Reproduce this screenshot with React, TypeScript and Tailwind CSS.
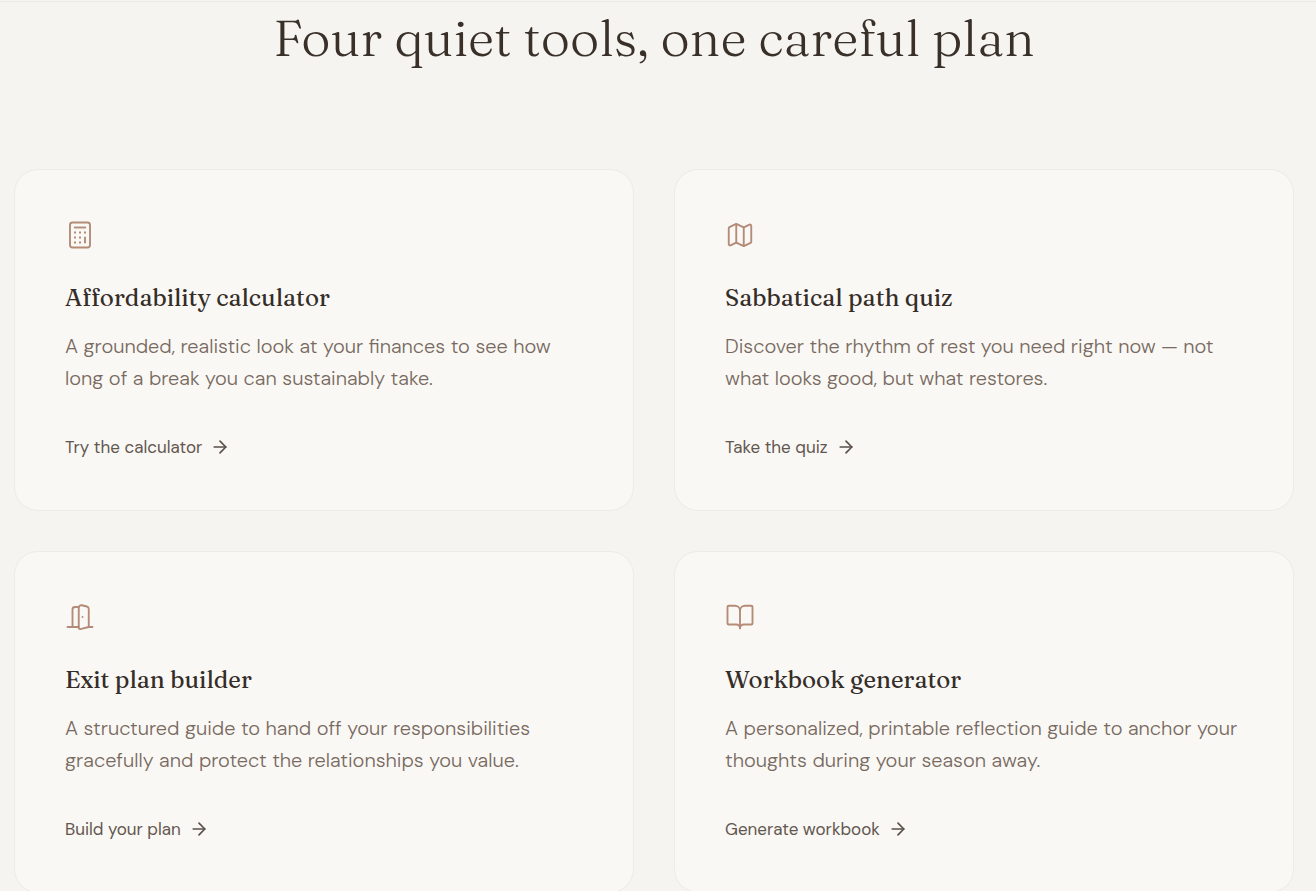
import { ArrowRight, BookOpen, Map } from 'lucide-react';
import type { ReactNode } from 'react';

const CalculatorIcon = () => (
  <svg
    className="size-[30px] text-[#b38b77]"
    viewBox="0 0 24 24"
    fill="none"
    stroke="currentColor"
    strokeWidth="1.5"
    strokeLinejoin="round"
    aria-hidden="true"
  >
    <rect x="4" y="2" width="16" height="20" rx="2" />
    <path d="M7.2 6h9.6" />
    <path d="M7.2 10h1.6M11.2 10h1.6M15.2 10h1.6M7.2 14h1.6M11.2 14h1.6M7.2 18h1.6M11.2 18h1.6M16 13.4v5.2" />
  </svg>
);

const DoorIcon = () => (
  <svg
    className="size-[30px] text-[#b38b77]"
    viewBox="0 0 24 24"
    fill="none"
    stroke="currentColor"
    strokeWidth="1.5"
    strokeLinecap="round"
    strokeLinejoin="round"
    aria-hidden="true"
  >
    <path d="M11 20H2" />
    <path d="M11 4.562v16.157a1 1 0 0 0 1.242.97L19 20V5.562a2 2 0 0 0-1.515-1.94l-4-1A2 2 0 0 0 11 4.561z" />
    <path d="M11 4H8a2 2 0 0 0-2 2v14" />
    <path d="M14 12h.01" />
    <path d="M22 20h-3" />
  </svg>
);

interface Tool {
  icon: ReactNode;
  title: string;
  description: string;
  action: string;
  href: string;
}

const tools: Tool[] = [
  {
    icon: <CalculatorIcon />,
    title: 'Affordability calculator',
    description:
      'A grounded, realistic look at your finances to see how long of a break you can sustainably take.',
    action: 'Try the calculator',
    href: '#calculator',
  },
  {
    icon: <Map className="size-[30px] text-[#b38b77]" strokeWidth={1.5} />,
    title: 'Sabbatical path quiz',
    description:
      'Discover the rhythm of rest you need right now — not what looks good, but what restores.',
    action: 'Take the quiz',
    href: '#quiz',
  },
  {
    icon: <DoorIcon />,
    title: 'Exit plan builder',
    description:
      'A structured guide to hand off your responsibilities gracefully and protect the relationships you value.',
    action: 'Build your plan',
    href: '#exit-plan',
  },
  {
    icon: <BookOpen className="size-[30px] text-[#b38b77]" strokeWidth={1.5} />,
    title: 'Workbook generator',
    description:
      'A personalized, printable reflection guide to anchor your thoughts during your season away.',
    action: 'Generate workbook',
    href: '#workbook',
  },
];

const ToolCard = ({ icon, title, description, action, href }: Tool) => (
  <article className="flex flex-col items-start rounded-3xl border border-[#edebe7] bg-[#faf8f5] p-[50px]">
    {icon}
    <h3 className="mt-8 font-['Fraunces','Liberation_Serif',serif] text-[24px] leading-8 font-normal text-[#352d28]">
      {title}
    </h3>
    <p className="mt-4 font-['DM_Sans','Open_Sans',sans-serif] text-[20px] leading-8 font-light text-[#786a60]">
      {description}
    </p>
    <a
      href={href}
      className="mt-10 flex items-center gap-2 font-['DM_Sans','Open_Sans',sans-serif] text-[17px] leading-[26px] text-[#62574f]"
    >
      {action}
      <ArrowRight className="size-5 text-[#5a4f48]" strokeWidth={2} />
    </a>
  </article>
);

export default function App() {
  return (
    <main className="min-h-screen bg-[#f6f4f0] pt-px">
      <section className="border-t border-[#edebe7] pr-[22px] pl-3.5">
        <h2 className="text-center font-['Fraunces','Liberation_Serif',serif] text-[51px] leading-[72px] font-light text-[#3a302a]">
          Four quiet tools, one careful plan
        </h2>
        <div className="mx-auto mt-[95px] grid max-w-[1280px] grid-cols-1 gap-10 md:grid-cols-2">
          {tools.map((tool) => (
            <ToolCard key={tool.title} {...tool} />
          ))}
        </div>
      </section>
    </main>
  );
}
